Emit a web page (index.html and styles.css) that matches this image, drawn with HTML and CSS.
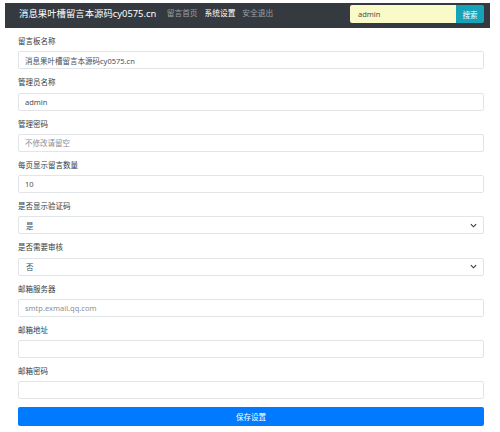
FILE: index.html
```html
<!DOCTYPE html>
<html lang="zh-CN">
<head>
<meta charset="utf-8">
<title>系统设置</title>
<link rel="stylesheet" href="styles.css">
</head>
<body>
<nav class="navbar">
  <span class="brand">消息果叶槽留言本源码cy0575.cn</span>
  <ul class="nav">
    <li class="nav-link">留言首页</li>
    <li class="nav-link active">系统设置</li>
    <li class="nav-link">安全退出</li>
  </ul>
  <form class="search">
    <input class="search-input" type="text" value="admin">
    <button class="search-btn" type="button">搜索</button>
  </form>
</nav>
<form class="settings">
  <div class="group">
    <label class="label">留言板名称</label>
    <input class="control" type="text" value="消息果叶槽留言本源码cy0575.cn">
  </div>
  <div class="group">
    <label class="label">管理员名称</label>
    <input class="control" type="text" value="admin">
  </div>
  <div class="group">
    <label class="label">管理密码</label>
    <input class="control" type="password" placeholder="不修改请留空">
  </div>
  <div class="group">
    <label class="label">每页显示留言数量</label>
    <input class="control" type="text" value="10">
  </div>
  <div class="group">
    <label class="label">是否显示验证码</label>
    <div class="select">是<svg class="caret" viewBox="0 0 8 5" width="7" height="5"><path d="M1 1 L4 4 L7 1" fill="none" stroke="#343a40" stroke-width="1.3"/></svg></div>
  </div>
  <div class="group">
    <label class="label">是否需要审核</label>
    <div class="select">否<svg class="caret" viewBox="0 0 8 5" width="7" height="5"><path d="M1 1 L4 4 L7 1" fill="none" stroke="#343a40" stroke-width="1.3"/></svg></div>
  </div>
  <div class="group">
    <label class="label">邮箱服务器</label>
    <input class="control" type="text" placeholder="smtp.exmail.qq.com">
  </div>
  <div class="group">
    <label class="label">邮箱地址</label>
    <input class="control" type="text">
  </div>
  <div class="group">
    <label class="label">邮箱密码</label>
    <input class="control" type="password">
  </div>
  <button class="save" type="button">保存设置</button>
</form>
</body>
</html>
```
FILE: styles.css
```css
* { box-sizing: border-box; }
body {
  margin: 0;
  background: #fff;
  font-family: "Noto Sans", "Noto Sans CJK SC", sans-serif;
  color: #212529;
}
.navbar {
  margin: 3px 10px 0 5px;
  height: 25px;
  background: #343a40;
  display: flex;
  align-items: center;
  padding: 0 6px 3px 14px;
}
.brand {
  color: #fff;
  font-size: 9.4px;
  line-height: 1;
  margin-right: 7px;
  white-space: nowrap;
}
.nav {
  list-style: none;
  margin: 0;
  padding: 0;
  display: flex;
  flex: 1;
}
.nav-link {
  font-size: 7.7px;
  color: rgba(255,255,255,.5);
  padding: 0 3.5px;
  line-height: 1;
}
.nav-link.active { color: #fff; }
.search {
  display: flex;
  margin: 0;
}
.search-input {
  width: 106px;
  height: 18px;
  border: 0;
  border-radius: 2px 0 0 2px;
  background: #fafac8;
  font-family: inherit;
  font-size: 7.5px;
  color: #495057;
  padding: 0 8px;
  outline: none;
}
.search-btn {
  width: 28px;
  height: 18px;
  border: 0;
  border-radius: 0 2px 2px 0;
  background: #17a2b8;
  color: #fff;
  font-family: inherit;
  font-size: 7.5px;
  padding: 0;
}
.settings {
  margin: 0;
  padding: 8px 16px 0 18px;
}
.group { margin-bottom: 8px; }
.label {
  display: block;
  font-size: 7.5px;
  line-height: 11.25px;
  margin-bottom: 4px;
  color: #343a40;
}
.control, .select {
  display: flex;
  align-items: center;
  width: 100%;
  height: 18px;
  border: 1px solid #e2e5e8;
  border-radius: 2px;
  background: #fff;
  font-family: inherit;
  font-size: 7.5px;
  color: #495057;
  padding: 0 6px;
  outline: none;
}
.control::placeholder { color: #8a9097; }
.select {
  justify-content: space-between;
  padding: 0 6px 0 7px;
}
.caret { display: block; }
.save {
  display: block;
  width: 100%;
  height: 19px;
  border: 0;
  border-radius: 2px;
  background: #007bff;
  color: #fff;
  font-family: inherit;
  font-size: 7.5px;
  padding: 0;
}
```
